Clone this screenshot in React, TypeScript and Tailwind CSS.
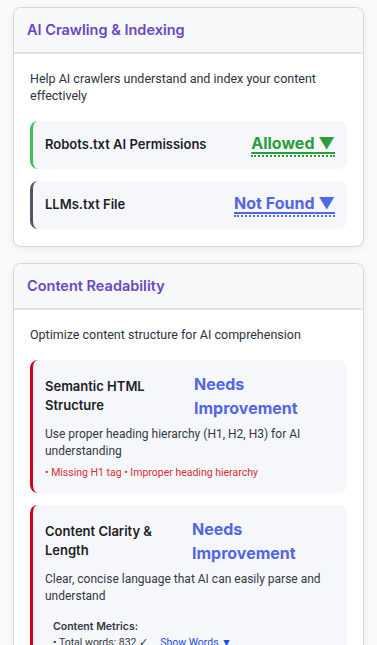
import React from "react";

const HEAD = "font-['Inter','Noto_Sans',sans-serif]";
const BODY = "font-['Roboto','Noto_Sans',sans-serif]";

function StatusLink({ text, tone }: { text: string; tone: "green" | "blue" }) {
  const cls =
    tone === "green"
      ? "text-[#2a9d3c] border-[#2a9d3c]"
      : "text-[#5366e3] border-[#5366e3]";
  return (
    <span
      className={`${HEAD} ${cls} inline-block font-bold text-[16px] leading-5 underline decoration-2 underline-offset-[3px] border-b-2 border-dotted pb-[2px] cursor-pointer`}
    >
      {text} ▼
    </span>
  );
}

function Card({ title, desc, children }: { title: string; desc: string; children: React.ReactNode }) {
  return (
    <div className="bg-white border border-[#d5d7dc] rounded-lg shadow-[0_2px_10px_rgba(0,0,0,0.06)] overflow-hidden">
      <div className="bg-[#f7f8fa] border-b-2 border-[#e1e3e8] h-[46px] px-[13px] flex items-center">
        <h2 className={`${HEAD} text-[#6b46c1] text-[14.5px] font-semibold`}>{title}</h2>
      </div>
      <div className="px-4 pt-4 pb-[17px]">
        <p className={`${BODY} text-[12.5px] leading-[17px] text-[#2d3340] mb-[17px]`}>{desc}</p>
        <div className="flex flex-col gap-3">{children}</div>
      </div>
    </div>
  );
}

function SimpleRow({ label, status, tone, border }: { label: string; status: string; tone: "green" | "blue"; border: string }) {
  return (
    <div className={`bg-[#f6f7fb] rounded-lg border-l-[3px] ${border} h-12 px-3 flex items-center justify-between`}>
      <span className={`${HEAD} text-[13px] font-semibold text-[#1c1e24]`}>{label}</span>
      <StatusLink text={status} tone={tone} />
    </div>
  );
}

function CheckItem({ title, desc, titleW, children }: { title: string; desc: string; titleW: string; children: React.ReactNode }) {
  return (
    <div className="bg-[#f6f7fb] rounded-lg border-l-[3px] border-[#d0021b] p-3">
      <div className="flex items-start">
        <span className={`${HEAD} ${titleW} mt-[5px] shrink-0 text-[13px] leading-[19px] font-semibold text-[#1c1e24]`}>
          {title}
        </span>
        <span className={`${HEAD} ml-[10px] text-[16px] leading-6 font-bold text-[#5366e3]`}>Needs Improvement</span>
      </div>
      <p className={`${BODY} mt-[6px] text-[12px] leading-[17px] text-[#333842]`}>{desc}</p>
      {children}
    </div>
  );
}

export default function App() {
  return (
    <div className="min-h-screen bg-[#fafafa] px-[13px] pt-[7px] pb-6 flex flex-col gap-4">
      <Card title="AI Crawling & Indexing" desc="Help AI crawlers understand and index your content effectively">
        <SimpleRow label="Robots.txt AI Permissions" status="Allowed" tone="green" border="border-[#3cc257]" />
        <SimpleRow label="LLMs.txt File" status="Not Found" tone="blue" border="border-[#4f5869]" />
      </Card>

      <Card title="Content Readability" desc="Optimize content structure for AI comprehension">
        <CheckItem
          title="Semantic HTML Structure"
          titleW="w-[139px]"
          desc="Use proper heading hierarchy (H1, H2, H3) for AI understanding"
        >
          <p className={`${BODY} mt-[5px] text-[10.5px] leading-4 text-[#d32f2f]`}>
            • Missing H1 tag • Improper heading hierarchy
          </p>
        </CheckItem>

        <CheckItem
          title="Content Clarity & Length"
          titleW="w-[137px]"
          desc="Clear, concise language that AI can easily parse and understand"
        >
          <div className="mt-[10px] px-2 py-1">
            <div className={`${HEAD} text-[10.5px] leading-4 font-semibold text-[#333842]`}>Content Metrics:</div>
            <div className={`${BODY} text-[10.5px] leading-4 text-[#333842] flex gap-3`}>
              <span>• Total words: 832 ✓</span>
              <span className="text-[#1d4ed8]">Show Words ▼</span>
            </div>
          </div>
        </CheckItem>
      </Card>
    </div>
  );
}
